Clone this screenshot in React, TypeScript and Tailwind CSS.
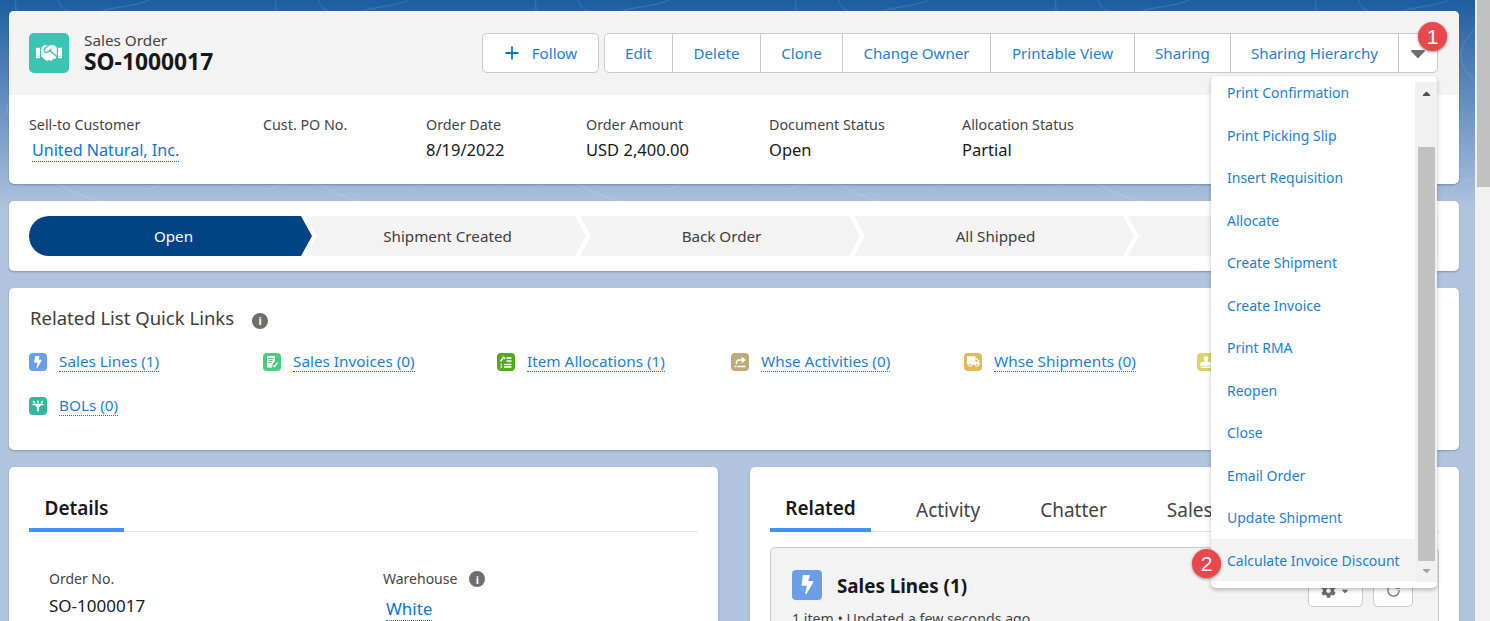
import React from "react";
import { FaBolt, FaHandshake, FaTruck, FaStamp, FaCog, FaCaretDown, FaCaretUp } from "react-icons/fa";
import { Plus, RotateCw } from "lucide-react";

const Info = ({ className = "" }: { className?: string }) => (
  <span className={"inline-flex h-4 w-4 items-center justify-center rounded-full bg-[#706e6b] text-[11px] font-bold leading-none text-white " + className}>i</span>
);

const IconBox = ({ bg, children }: { bg: string; children: React.ReactNode }) => (
  <span className={"flex h-[18px] w-[18px] shrink-0 items-center justify-center rounded-[4px] text-white " + bg}>{children}</span>
);

const DocCheck = () => (
  <svg viewBox="0 0 18 18" className="h-[18px] w-[18px]" fill="#fff">
    <path d="M4 3h8v5l-2.5 3.2-.4 3.3H4z" />
    <path d="M5.5 5.5h5M5.5 7.5h4M5.5 9.5h3" stroke="#4bca81" strokeWidth="1" />
    <path d="M10.5 12.5l1 1 3-3.8" stroke="#fff" strokeWidth="1.3" fill="none" />
  </svg>
);
const ListIcon = () => (
  <svg viewBox="0 0 18 18" className="h-[18px] w-[18px]" fill="none" stroke="#fff" strokeWidth="1.5">
    <path d="M3.5 8.5L6.5 4l1.5 2M9.5 5H14.5M9.5 8H14.5M3.5 11.5h1.5M3.5 14h1.5M7 11.5h7.5M7 14h7.5" />
  </svg>
);
const ActivityIcon = () => (
  <svg viewBox="0 0 18 18" className="h-[18px] w-[18px]" fill="none" stroke="#fff" strokeWidth="1.6">
    <path d="M5.5 11V9.5a2.5 2.5 0 0 1 2.5-2.5h5M10.8 4.6L13.4 7l-2.6 2.4" />
    <path d="M3.5 13.5h11" strokeDasharray="2 1 8" />
  </svg>
);
const BolIcon = () => (
  <svg viewBox="0 0 18 18" className="h-[18px] w-[18px]" fill="none" stroke="#fff" strokeWidth="1.5">
    <path d="M4 4l2 2M14 4l-2 2M9 3.5V6M3.5 7.5h11M9 7.5v7" />
    <path d="M6.5 7.5L9 10.5l2.5-3" />
  </svg>
);

const QuickLink = ({ icon, label, className = "" }: { icon: React.ReactNode; label: string; className?: string }) => (
  <div className={"flex items-center gap-3 " + className}>
    {icon}
    <a className="border-b border-dotted border-[#0176d3] text-[15.3px] leading-[20px] text-[#1b7fd4]">{label}</a>
  </div>
);

const Highlight = ({ label, value, link, className = "" }: { label: string; value: string; link?: boolean; className?: string }) => (
  <div className={"flex flex-col " + className}>
    <span className="text-[14.3px] leading-[20px] text-[#444444]">{label}</span>
    {link ? (
      <a className="ml-[3px] mt-[4px] self-start border-b border-dotted border-[#0176d3] text-[16.1px] leading-[22px] text-[#0b76d8]">{value}</a>
    ) : (
      <span className="mt-[4px] text-[16.5px] leading-[22px] text-[#181818]">{value}</span>
    )}
  </div>
);

const topButtons: [string, string][] = [
  ["Edit", "w-[68px]"],
  ["Delete", "w-[88px]"],
  ["Clone", "w-[82px]"],
  ["Change Owner", "w-[148px]"],
  ["Printable View", "w-[144px]"],
  ["Sharing", "w-[96px]"],
  ["Sharing Hierarchy", "w-[168px]"],
];

const menu = [
  "Print Confirmation",
  "Print Picking Slip",
  "Insert Requisition",
  "Allocate",
  "Create Shipment",
  "Create Invoice",
  "Print RMA",
  "Reopen",
  "Close",
  "Email Order",
  "Update Shipment",
  "Calculate Invoice Discount",
];

const Chevron = ({ label, active, first, last }: { label: string; active?: boolean; first?: boolean; last?: boolean }) => (
  <div
    className={
      "flex h-10 shrink-0 items-center justify-center pt-px text-[15.2px] " +
      (active ? "bg-[#014486] text-white " : "bg-[#f3f3f3] text-[#3e3e3c] ") +
      (first
        ? "w-[283px] rounded-l-[20px] pl-[6px] [clip-path:polygon(0_0,calc(100%-11px)_0,100%_50%,calc(100%-11px)_100%,0_100%)] "
        : last
        ? "-ml-[6px] w-[310px] pl-[3px] [clip-path:polygon(0_0,100%_0,100%_100%,0_100%,11px_50%)] "
        : "-ml-[6px] w-[280px] pl-[3px] [clip-path:polygon(0_0,calc(100%-11px)_0,100%_50%,calc(100%-11px)_100%,0_100%,11px_50%)] ")
    }
  >
    {label}
  </div>
);

const Topo = () => (
  <svg className="absolute inset-0 h-full w-full" fill="none" stroke="#ffffff" strokeOpacity="0.13" strokeWidth="1">
    <defs>
      <pattern id="topo" width="260" height="210" patternUnits="userSpaceOnUse">
        <path d="M20 -10c-14 20 10 40 5 70s-30 40-10 70M60 -10c-10 20 20 30 40 22s50-4 60-22M80 -10c4 8 20 10 40 4" />
        <path d="M190 20c30-14 60 6 50 36s-50 40-70 20-4-46 20-56zM196 34c18-8 34 4 28 20s-28 22-40 10-4-24 12-30z" />
        <path d="M60 100c30-20 70-6 70 26s-40 44-66 30-30-40-4-56zM72 116c16-10 36-2 36 14s-20 22-34 16-16-20-2-30z" />
        <path d="M150 190c20-16 60-20 90-4M10 190c14-10 40-12 60 0s50 14 70 20M200 130c14 8 40 6 60-6" />
      </pattern>
    </defs>
    <rect width="100%" height="100%" fill="url(#topo)" stroke="none" />
  </svg>
);

const badge = "absolute flex h-[29px] w-[29px] items-center justify-center rounded-full bg-[#e8474c] font-['Liberation_Sans',sans-serif] text-[21px] text-white shadow-[0_1px_3px_rgba(0,0,0,0.45)]";

export default function App() {
  return (
    <div className="flex h-[621px] w-[1490px] overflow-hidden bg-[#f1f1f1] font-['Noto_Sans',sans-serif]">
      <div className="relative h-full w-[1475px] shrink-0 overflow-hidden bg-[#b0c4df]">
        <div className="absolute inset-x-0 top-0 h-[210px] bg-gradient-to-b from-[#1b5da0] to-[#b0c4df]">
          <Topo />
        </div>

        <div className="relative flex flex-col gap-[17px] pl-[9px] pr-[16px] pt-[11px]">
          {/* Header card */}
          <section className="h-[173px] overflow-hidden rounded-[5px] bg-white shadow-[0_1px_2px_rgba(0,0,0,0.25)]">
            <div className="flex h-[84px] items-center justify-between bg-[#f3f3f3] pl-[20px] pr-[21px]">
              <div className="flex items-center gap-[15px]">
                <span className="flex h-10 w-10 items-center justify-center rounded-[5px] bg-[#3cc4b2] text-white">
                  <FaHandshake size={26} />
                </span>
                <div className="flex flex-col pb-[2px]">
                  <span className="text-[15.3px] leading-[18px] text-[#444444]">Sales Order</span>
                  <span className="mt-[1px] text-[22.8px] font-bold leading-[24px] text-[#181818]">SO-1000017</span>
                </div>
              </div>
              <div className="flex items-center gap-[5px]">
                <button className="flex h-10 w-[117px] items-center justify-center gap-[10px] rounded-[5px] border border-[#c9c9c9] bg-white text-[15.1px] text-[#1b7fd4]">
                  <Plus size={20} strokeWidth={2.2} className="-ml-[2px] text-[#0176d3]" />
                  Follow
                </button>
                <div className="flex h-10 overflow-hidden rounded-[5px] border border-[#c9c9c9] bg-white">
                  {topButtons.map(([t, w]) => (
                    <button key={t} className={"flex h-full items-center justify-center border-r border-[#c9c9c9] text-[15.1px] text-[#1b7fd4] " + w}>
                      {t}
                    </button>
                  ))}
                  <button className="flex h-full w-[38px] items-center justify-center text-[#706e6b]">
                    <FaCaretDown size={24} />
                  </button>
                </div>
              </div>
            </div>
            <div className="flex pl-[20px] pt-[20px]">
              <Highlight label="Sell-to Customer" value="United Natural, Inc." link className="w-[234px]" />
              <Highlight label="Cust. PO No." value="" className="w-[163px]" />
              <Highlight label="Order Date" value="8/19/2022" className="w-[160px]" />
              <Highlight label="Order Amount" value="USD 2,400.00" className="w-[183px]" />
              <Highlight label="Document Status" value="Open" className="w-[193px]" />
              <Highlight label="Allocation Status" value="Partial" />
            </div>
          </section>

          {/* Path card */}
          <section className="h-[70px] overflow-hidden rounded-[5px] bg-white pl-[20px] pt-[15px] shadow-[0_1px_2px_rgba(0,0,0,0.25)]">
            <div className="flex">
              <Chevron label="Open" active first />
              <Chevron label="Shipment Created" />
              <Chevron label="Back Order" />
              <Chevron label="All Shipped" />
              <Chevron label="" last />
            </div>
          </section>

          {/* Quick links */}
          <section className="h-[162px] rounded-[5px] bg-white pl-[21px] pt-[17px] shadow-[0_1px_2px_rgba(0,0,0,0.25)]">
            <div className="flex items-center gap-[18px]">
              <h2 className="text-[18.5px] leading-[26px] text-[#3e3e3c]">Related List Quick Links</h2>
              <Info className="mt-[5px]" />
            </div>
            <div className="mt-[20px] -ml-px flex">
              <QuickLink className="w-[234px]" icon={<IconBox bg="bg-[#6b9ee8]"><FaBolt size={12} /></IconBox>} label="Sales Lines (1)" />
              <QuickLink className="w-[234px]" icon={<IconBox bg="bg-[#4bca81]"><DocCheck /></IconBox>} label="Sales Invoices (0)" />
              <QuickLink className="w-[234px]" icon={<IconBox bg="bg-[#54a81e]"><ListIcon /></IconBox>} label="Item Allocations (1)" />
              <QuickLink className="w-[233px]" icon={<IconBox bg="bg-[#bcac7b]"><ActivityIcon /></IconBox>} label="Whse Activities (0)" />
              <QuickLink className="w-[233px]" icon={<IconBox bg="bg-[#e0bb5c]"><FaTruck size={13} /></IconBox>} label="Whse Shipments (0)" />
              <QuickLink icon={<IconBox bg="bg-[#dcd566]"><FaStamp size={12} /></IconBox>} label="" />
            </div>
            <QuickLink className="-ml-px mt-[23px]" icon={<IconBox bg="bg-[#34b59d]"><BolIcon /></IconBox>} label="BOLs (0)" />
          </section>

          {/* Bottom cards */}
          <div className="flex gap-[32px]">
            <section className="h-[300px] w-[709px] shrink-0 rounded-[5px] bg-white px-[20px] pt-[20px] shadow-[0_1px_2px_rgba(0,0,0,0.25)]">
              <div className="border-b border-[#e5e5e5]">
                <div className="-mb-px flex h-[45px] w-[95px] items-center justify-center border-b-[4px] border-[#3f93f2] pt-[2px] text-[19px] font-semibold text-[#181818]">Details</div>
              </div>
              <div className="flex px-[20px] pt-[37px]">
                <div className="w-[334px]">
                  <div className="text-[14px] leading-[20px] text-[#444444]">Order No.</div>
                  <div className="mt-[6px] text-[17px] leading-[22px] text-[#181818]">SO-1000017</div>
                </div>
                <div>
                  <div className="flex items-center gap-[12px] text-[14px] leading-[20px] text-[#444444]">Warehouse <Info /></div>
                  <a className="ml-[3px] mt-[9px] inline-block border-b border-dotted border-[#0176d3] text-[17px] leading-[22px] text-[#0b76d8]">White</a>
                </div>
              </div>
            </section>
            <section className="h-[300px] w-[709px] shrink-0 overflow-hidden rounded-[5px] bg-white px-[20px] pt-[20px] shadow-[0_1px_2px_rgba(0,0,0,0.25)]">
              <div className="flex border-b border-[#e5e5e5] text-[19px]">
                <div className="-mb-px flex h-[45px] w-[101px] items-center justify-center border-b-[4px] border-[#3f93f2] pt-[2px] font-semibold text-[#181818]">Related</div>
                <div className="ml-[45px] flex h-[44px] items-center pt-[2px] text-[#444444]">Activity</div>
                <div className="ml-[60px] flex h-[44px] items-center pt-[2px] text-[#444444]">Chatter</div>
                <div className="ml-[60px] flex h-[44px] items-center pt-[2px] text-[#444444]">Sales</div>
              </div>
              <div className="mt-[15px] flex h-[200px] justify-between rounded-[5px] border border-[#c9c9c9] bg-[#f3f3f3] pl-[21px] pr-[25px] pt-[20px]">
                <div>
                  <div className="flex items-center gap-[15px]">
                    <span className="flex h-[30px] w-[30px] items-center justify-center rounded-[4px] bg-[#6b9ee8] text-white"><FaBolt size={19} /></span>
                    <span className="pt-[3px] text-[18.8px] font-bold leading-[30px] text-[#181818]">Sales Lines (1)</span>
                  </div>
                  <div className="mt-[8px] text-[14.2px] leading-[20px] text-[#444444]">1 item • Updated a few seconds ago</div>
                </div>
                <div className="mt-[6px] flex gap-[10px]">
                  <button className="flex h-[33px] w-[55px] items-center justify-center gap-1 rounded-[5px] border border-[#c9c9c9] bg-white text-[#706e6b]"><FaCog size={15} /><FaCaretDown size={10} /></button>
                  <button className="flex h-[33px] w-[40px] items-center justify-center rounded-[5px] border border-[#c9c9c9] bg-white text-[#706e6b]"><RotateCw size={15} /></button>
                </div>
              </div>
            </section>
          </div>
        </div>

        {/* Dropdown menu */}
        <div className="absolute left-[1211px] top-[76px] flex h-[512px] w-[226px] rounded-[5px] bg-white py-[6px] shadow-[0_2px_4px_rgba(0,0,0,0.25)]">
          <ul className="h-[500px] w-[204px] overflow-hidden">
            {menu.map((m, i) => (
              <li key={m} className={"flex h-[42.5px] items-center pl-[16px] text-[14px] text-[#1b7fd4] " + (i === 0 ? "-mt-[10.75px] " : "") + (i === 11 ? "bg-[#f3f3f3]" : "")}>{m}</li>
            ))}
          </ul>
          <div className="flex h-[500px] w-[22px] flex-col items-center bg-[#f1f1f1] text-[#505050]">
            <FaCaretUp size={13} className="mt-[5px] shrink-0" />
            <div className="mt-[47px] h-[414px] w-[17px] shrink-0 bg-[#c1c1c1]" />
            <FaCaretDown size={13} className="mt-[3px] shrink-0 text-[#a3a3a3]" />
          </div>
        </div>

        {/* Numbered badges */}
        <span className={badge + " left-[1418px] top-[22px]"}>1</span>
        <span className={badge + " left-[1192px] top-[549px]"}>2</span>
      </div>

      {/* Page scrollbar */}
      <div className="ml-[2px] h-[187px] w-[13px] bg-[#c1c1c1]" />
    </div>
  );
}
